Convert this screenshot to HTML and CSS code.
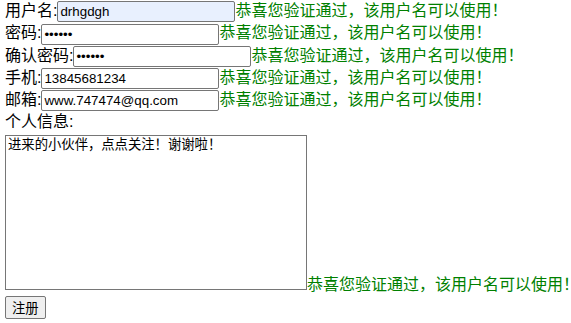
FILE: index.html
```html
<!DOCTYPE html>
<html lang="zh">
<head>
    <meta charset="UTF-8">
    <title>注册</title>
    <link rel="stylesheet" href="styles.css">
</head>
<body>
    <form class="reg-form">
        用户名:<input type="text" class="field autofill" value="drhgdgh"><span class="ok">恭喜您验证通过，该用户名可以使用！</span><br>
        密码:<input type="password" class="field" value="123456"><span class="ok">恭喜您验证通过，该用户名可以使用！</span><br>
        确认密码:<input type="password" class="field" value="123456"><span class="ok">恭喜您验证通过，该用户名可以使用！</span><br>
        手机:<input type="text" class="field" value="13845681234"><span class="ok">恭喜您验证通过，该用户名可以使用！</span><br>
        邮箱:<input type="text" class="field" value="www.747474@qq.com"><span class="ok">恭喜您验证通过，该用户名可以使用！</span><br>
        个人信息:<br>
        <textarea class="info">进来的小伙伴，点点关注！谢谢啦！</textarea><span class="ok">恭喜您验证通过，该用户名可以使用！</span><br>
        <button type="button" class="submit-btn">注册</button>
    </form>
</body>
</html>
```

FILE: styles.css
```css
html, body {
    overflow: hidden;
}

body {
    margin: 0;
    padding: 0 5px;
    font-family: "Liberation Sans", "Noto Sans CJK SC", sans-serif;
    font-size: 16px;
    color: #000;
    white-space: nowrap;
}

.reg-form {
    line-height: 22px;
}

.field {
    box-sizing: border-box;
    width: 178px;
    height: 21px;
    padding: 1px 2px;
    border: 1px solid #767676;
    border-radius: 2px;
    font-family: "Liberation Sans", "Noto Sans CJK SC", sans-serif;
    font-size: 13.33px;
    vertical-align: middle;
}

.autofill {
    background: #e8f0fe;
}

.ok {
    color: #008000;
}

.info {
    box-sizing: border-box;
    width: 302px;
    height: 155px;
    margin: 2px 0 0;
    padding: 2px;
    border: 1px solid #767676;
    font-family: "Liberation Mono", "Noto Sans CJK SC", monospace;
    font-size: 13.33px;
    line-height: 16px;
    resize: none;
}

.submit-btn {
    padding: 1px 6px;
    font-family: "Liberation Sans", "Noto Sans CJK SC", sans-serif;
    font-size: 13.33px;
    background: #efefef;
    border: 1px solid #767676;
    border-radius: 2px;
}
```
